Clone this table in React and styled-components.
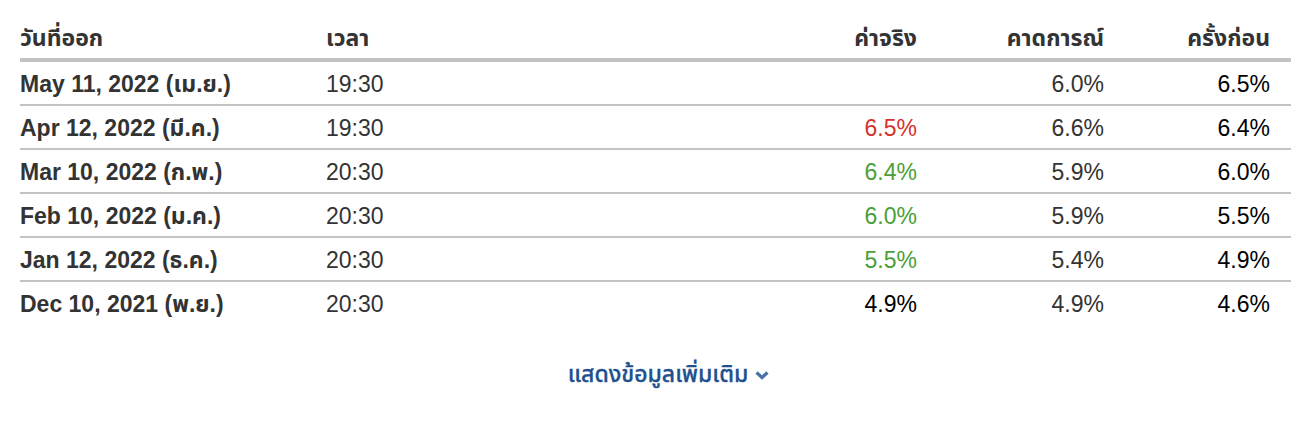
import React from "react";
import styled, { createGlobalStyle } from "styled-components";

const GlobalStyle = createGlobalStyle`
  body {
    margin: 0;
    background: #fff;
    font-family: "Liberation Sans", Arial, "Noto Sans Thai", "Noto Sans", sans-serif;
  }
`;

const rows = [
  { date: "May 11, 2022 (เม.ย.)", time: "19:30", actual: "", tone: "", forecast: "6.0%", previous: "6.5%" },
  { date: "Apr 12, 2022 (มี.ค.)", time: "19:30", actual: "6.5%", tone: "down", forecast: "6.6%", previous: "6.4%" },
  { date: "Mar 10, 2022 (ก.พ.)", time: "20:30", actual: "6.4%", tone: "up", forecast: "5.9%", previous: "6.0%" },
  { date: "Feb 10, 2022 (ม.ค.)", time: "20:30", actual: "6.0%", tone: "up", forecast: "5.9%", previous: "5.5%" },
  { date: "Jan 12, 2022 (ธ.ค.)", time: "20:30", actual: "5.5%", tone: "up", forecast: "5.4%", previous: "4.9%" },
  { date: "Dec 10, 2021 (พ.ย.)", time: "20:30", actual: "4.9%", tone: "", forecast: "4.9%", previous: "4.6%" },
];

const Page = styled.div`
  padding-left: 20px;
`;

const Row = styled.div`
  display: grid;
  grid-template-columns: 306px 400px 191px 187px 187px;
  align-items: center;
  box-sizing: border-box;
  height: ${(p) => (p.$head ? "62px" : p.$last ? "42px" : "44px")};
  padding-top: ${(p) => (p.$head ? "20px" : "3px")};
  border-bottom: ${(p) => (p.$head ? "4px" : p.$last ? "0" : "2px")} solid #c3c3c3;
  font-size: 23px;
  color: #333;
`;

const Cell = styled.div`
  text-align: ${(p) => (p.$right ? "right" : "left")};
  padding-right: ${(p) => (p.$edge ? "21px" : "0")};
  font-weight: ${(p) => (p.$bold ? "bold" : "normal")};
  color: ${(p) =>
    p.$tone === "down" ? "#d6322b" : p.$tone === "up" ? "#4a9f36" : p.$color || "#333"};
  white-space: nowrap;
`;

const More = styled.div`
  display: flex;
  justify-content: center;
  align-items: center;
  gap: 7px;
  padding: 34px 0 0 26px;
  color: #21508f;
  font-size: 23px;
  font-weight: 500;
  -webkit-text-stroke: 0.3px #21508f;
`;

const Chevron = () => (
  <svg width="14" height="9" viewBox="0 0 14 9">
    <path d="M1.5 1.5 L7 6.5 L12.5 1.5" fill="none" stroke="#4a72a8" strokeWidth="3.2" />
  </svg>
);

export default function App() {
  return (
    <Page>
      <GlobalStyle />
      <Row $head>
        <Cell $bold>วันที่ออก</Cell>
        <Cell $bold>เวลา</Cell>
        <Cell $bold $right>ค่าจริง</Cell>
        <Cell $bold $right>คาดการณ์</Cell>
        <Cell $bold $right $edge>ครั้งก่อน</Cell>
      </Row>
      {rows.map((r, i) => (
        <Row key={i} $last={i === rows.length - 1}>
          <Cell $bold>{r.date}</Cell>
          <Cell>{r.time}</Cell>
          <Cell $right $tone={r.tone} $color="#000">{r.actual}</Cell>
          <Cell $right>{r.forecast}</Cell>
          <Cell $right $edge $color="#000">{r.previous}</Cell>
        </Row>
      ))}
      <More>
        แสดงข้อมูลเพิ่มเติม
        <Chevron />
      </More>
    </Page>
  );
}
